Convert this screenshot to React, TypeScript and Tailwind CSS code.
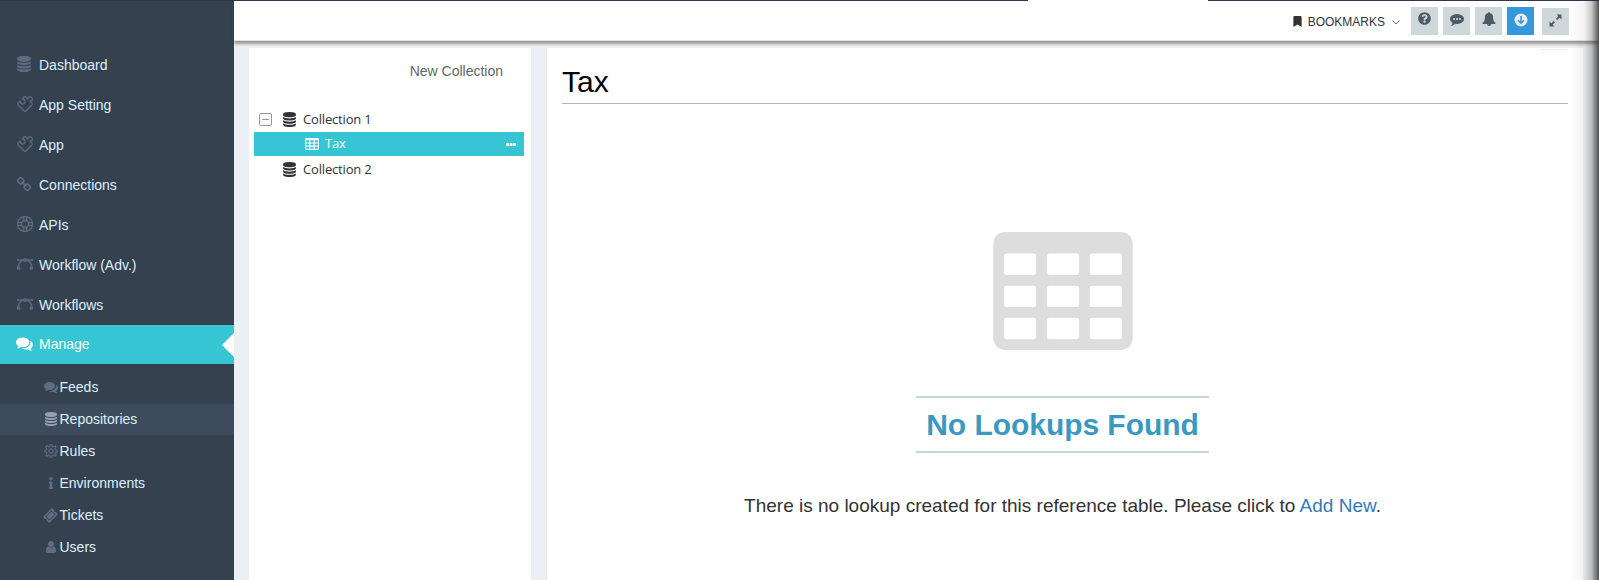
import React from "react";
import { SlPuzzle, SlSupport, SlVector, SlSettings } from "react-icons/sl";
import { FaInfo, FaTicketAlt, FaQuestionCircle, FaBookmark } from "react-icons/fa";

type IconProps = { className?: string };

const Database = ({ className }: IconProps) => (
  <svg viewBox="0 0 1536 1792" className={className} fill="currentColor">
    <path d="M768 768q237 0 443-43t325-127v170q0 69-103 128t-280 93.5-385 34.5-385-34.5-280-93.5-103-128v-170q119 84 325 127t443 43zm0 768q237 0 443-43t325-127v170q0 69-103 128t-280 93.5-385 34.5-385-34.5-280-93.5-103-128v-170q119 84 325 127t443 43zm0-384q237 0 443-43t325-127v170q0 69-103 128t-280 93.5-385 34.5-385-34.5-280-93.5-103-128v-170q119 84 325 127t443 43zm0-1152q208 0 385 34.5t280 93.5 103 128v128q0 69-103 128t-280 93.5-385 34.5-385-34.5-280-93.5-103-128v-128q0-69 103-128t280-93.5 385-34.5z" />
  </svg>
);

const Comments = ({ className }: IconProps) => (
  <svg viewBox="0 0 1792 1792" className={className} fill="currentColor">
    <path d="M1408 768q0 139-94 257t-256.5 186.5-353.5 68.5q-86 0-176-16-124 88-278 128-36 9-86 16h-3q-11 0-20.5-8t-11.5-21q-1-3-1-6.5t.5-6.5 2-6l2.5-5t3.5-5.5 4-5 4.5-5 4-4.5q5-6 23-25t26-29.5 22.5-29 25-38.5 20.5-44q-124-72-195-177t-71-224q0-139 94-257t256.5-186.5 353.5-68.5 353.5 68.5 256.500 186.5 94 257zm384 256q0 120-71 224.5t-195 176.5q10 24 20.5 44t25 38.5 22.5 29 26 29.5 23 25q1 1 4 4.5t4.5 5 4 5 3.5 5.5l2.5 5t2 6 .5 6.5-1 6.5q-3 14-13 22t-22 7q-50-7-86-16-154-40-278-128-90 16-176 16-271 0-472-132 58 4 88 4 161 0 309-45t264-129q125-92 192-212t67-254q0-77-23-152 129 71 204 178t75 230z" />
  </svg>
);

const Commenting = ({ className }: IconProps) => (
  <svg viewBox="0 0 1792 1792" className={className} fill="currentColor">
    <path
      fillRule="evenodd"
      d="M640 896q0-53-37.5-90.5t-90.5-37.5-90.5 37.5-37.5 90.5 37.5 90.5 90.5 37.5 90.5-37.5 37.5-90.5zm384 0q0-53-37.5-90.5t-90.5-37.5-90.5 37.5-37.5 90.5 37.5 90.5 90.5 37.5 90.5-37.5 37.5-90.5zm384 0q0-53-37.5-90.5t-90.5-37.5-90.5 37.5-37.5 90.5 37.5 90.5 90.5 37.5 90.5-37.5 37.5-90.5zm384 0q0 174-120 321.5t-326 233-450 85.5q-110 0-211-18-173 173-435 229-52 10-86 13-12 1-22-6t-13-18q-4-15 20-37 5-5 23.5-21.5t25.5-23.5 23.5-25.5 24-31.5 20.5-37 20-48 14.5-57.5 12.5-72.5q-146-90-229.5-216.5t-83.5-269.5q0-174 120-321.5t326-233 450-85.5 450 85.5 326 233 120 321.5z"
    />
  </svg>
);

const Bell = ({ className }: IconProps) => (
  <svg viewBox="0 0 1792 1792" className={className} fill="currentColor">
    <path d="M912 1696q0-16-16-16-59 0-101.5-42.5t-42.5-101.5q0-16-16-16t-16 16q0 73 51.5 124.5t124.5 51.5q16 0 16-16zm816-288q0 52-38 90t-90 38h-448q0 106-75 181t-181 75-181-75-75-181h-448q-52 0-90-38t-38-90q50-42 91-88t85-119.5 74.5-158.5 50-206 19.5-260q0-152 117-282.5t307-158.5q-8-19-8-39 0-40 28-68t68-28 68 28 28 68q0 20-8 39 190 28 307 158.5t117 282.5q0 139 19.5 260t50 206 74.5 158.5 85 119.5 91 88z" />
  </svg>
);

const User = ({ className }: IconProps) => (
  <svg viewBox="256 128 1280 1536" className={className} fill="currentColor">
    <path d="M1536 1399q0 109-62.5 187t-150.5 78h-854q-88 0-150.5-78t-62.5-187q0-85 8.5-160.5t31.5-152 58.5-131 94-89 134.5-34.5q131 128 313 128t313-128q76 0 134.5 34.5t94 89 58.5 131 31.5 152 8.5 160.5zm-256-887q0 159-112.5 271.5t-271.5 112.5-271.5-112.5-112.5-271.5 112.5-271.5 271.5-112.5 271.5 112.5 112.5 271.5z" />
  </svg>
);

const Chain = ({ className }: IconProps) => (
  <svg viewBox="0 0 14 14" className={className} fill="none" stroke="currentColor">
    <rect x="-2.900" y="-2.600" width="5.800" height="5.200" rx="2.200" strokeWidth="1.600" transform="translate(3.800 3.800) rotate(45)" />
    <rect x="-2.900" y="-2.600" width="5.800" height="5.200" rx="2.200" strokeWidth="1.600" transform="translate(10.200 10.200) rotate(45)" />
    <path d="M5 5l4 4" strokeWidth="1.600" strokeLinecap="round" />
  </svg>
);

const ArrowCircle = ({ className }: IconProps) => (
  <svg viewBox="0 0 14 14" className={className} fill="none">
    <circle cx="7" cy="7" r="6.5" fill="#e4eff8" />
    <path d="M7 3v7M4 7.2l3 3 3-3" stroke="#3598dc" strokeWidth="1.6" />
  </svg>
);

const Expand = ({ className }: IconProps) => (
  <svg viewBox="0 0 12 12" className={className}>
    <path d="M7 0.5h4.500v4.500zM0.500 7v4.500h4.500z" fill="currentColor" />
    <path d="M10 2L7 5M5 7L2 10" stroke="currentColor" strokeWidth="1.8" />
  </svg>
);

const COLS = [128, 640, 1152];
const ROWS = [256, 640, 1024];

const Table = ({ className }: IconProps) => (
  <svg viewBox="0 0 1664 1408" className={className} fill="currentColor">
    <path
      fillRule="evenodd"
      d={
        "M160 0h1344q160 0 160 160v1088q0 160-160 160h-1344q-160 0-160-160v-1088q0-160 160-160z" +
        ROWS.flatMap((y) =>
          COLS.map(
            (x) =>
              `M${x + 32} ${y}h320q32 0 32 32v192q0 32-32 32h-320q-32 0-32-32v-192q0-32 32-32z`
          )
        ).join("")
      }
    />
  </svg>
);

const lineIcon = "size-4 stroke-current [stroke-width:28]";

const mainNav = [
  { label: "Dashboard", icon: <Database className="h-4 w-[14px]" /> },
  { label: "App Setting", icon: <SlPuzzle className={lineIcon} /> },
  { label: "App", icon: <SlPuzzle className={lineIcon} /> },
  { label: "Connections", icon: <Chain className="size-[14px]" /> },
  { label: "APIs", icon: <SlSupport className={lineIcon} /> },
  { label: "Workflow (Adv.)", icon: <SlVector className={lineIcon} /> },
  { label: "Workflows", icon: <SlVector className={lineIcon} /> },
];

const subNav = [
  { label: "Feeds", icon: <Comments className="size-[14px]" /> },
  { label: "Repositories", icon: <Database className="h-[14px] w-3" />, active: true },
  { label: "Rules", icon: <SlSettings className="size-[14px] stroke-current [stroke-width:28]" /> },
  { label: "Environments", icon: <FaInfo className="h-3 w-[6px]" /> },
  { label: "Tickets", icon: <FaTicketAlt className="size-[13px] -rotate-45" /> },
  { label: "Users", icon: <User className="h-3 w-[10px]" /> },
];

function Sidebar() {
  return (
    <nav className="flex w-[234px] shrink-0 flex-col bg-[#364150] pt-[44px] text-[14px] text-[#dcefff]">
      {mainNav.map((n) => (
        <a key={n.label} className="flex h-10 items-center">
          <span className="ml-[17px] mb-[2px] flex w-[22px] text-[#606c80]">{n.icon}</span>
          {n.label}
        </a>
      ))}
      <a className="flex h-[39px] items-center justify-between bg-[#36c6d3] text-white">
        <span className="flex items-center">
          <Comments className="ml-4 mr-[6px] mb-[2px] size-[17px]" />
          Manage
        </span>
        <svg viewBox="0 0 12 24" className="h-6 w-3">
          <path d="M12 0v24L0 12z" fill="#fff" />
        </svg>
      </a>
      <div className="flex flex-col pt-2">
        {subNav.map((n) => (
          <a
            key={n.label}
            className={
              n.active
                ? "mb-px flex h-[31px] items-center bg-[#3e4b5c]"
                : "mb-px flex h-[31px] items-center"
            }
          >
            <span
              className={
                n.active
                  ? "ml-[43px] mr-px mb-px flex w-[15.5px] justify-center text-[#959fae]"
                  : "ml-[43px] mr-px mb-px flex w-[15.5px] justify-center text-[#606c80]"
              }
            >
              {n.icon}
            </span>
            {n.label}
          </a>
        ))}
      </div>
    </nav>
  );
}

const toolButton = "flex h-7 w-[27px] items-center justify-center bg-[#ced7da] pb-1 text-[#4f5965]";

function Header() {
  return (
    <header className="relative z-10 flex h-10 shrink-0 items-start justify-end border-b border-[#dfe3e6] bg-white pr-[30px] pt-[6px] shadow-[0_3px_3px_rgba(60,60,60,0.5)]">
      <div className="flex h-7 items-center text-[12px] text-[#333]">
        <FaBookmark className="mr-[6px] mt-px h-[11px] w-[9px]" />
        <span className="mt-px">BOOKMARKS</span>
        <svg viewBox="0 0 8 5" className="ml-[7px] mr-[11px] mt-[2px] h-[5px] w-2" fill="none">
          <path d="M.5.5L4 4 7.500.5" stroke="#666" />
        </svg>
      </div>
      <div className="flex gap-[5px]">
        <span className={toolButton}><FaQuestionCircle className="mb-px size-[13px]" /></span>
        <span className={toolButton}><Commenting className="size-[14px]" /></span>
        <span className={toolButton}><Bell className="size-[14px]" /></span>
        <span className="flex h-7 w-[27px] items-center justify-center bg-[#3598dc] pb-[3px]">
          <ArrowCircle className="size-[14px]" />
        </span>
      </div>
      <span className="ml-2 mt-px flex h-[27px] w-[27px] items-center justify-center bg-[#ced7da] pb-[3px] text-[#4f5965]">
        <Expand className="size-[13px]" />
      </span>
    </header>
  );
}

function CollectionTree() {
  return (
    <aside className="w-[282px] shrink-0 bg-white pl-[5px] pr-[7px]">
      <div className="flex h-[59px] items-start justify-end pr-[21px] pt-[13px] text-[14px] leading-5 text-[#666]">
        New Collection
      </div>
      <div className="font-['Open_Sans','Noto_Sans',sans-serif] text-[13px] tracking-[-0.17px] text-[#333]">
        <div className="flex h-[25px] items-center">
          <svg viewBox="0 0 13 13" className="ml-[5px] size-[13px]" fill="none" stroke="#999">
            <rect x=".5" y=".5" width="12" height="12" rx="1.500" />
            <path d="M3 6.500h7" />
          </svg>
          <Database className="ml-[11px] mr-[7px] h-[15px] w-[13px]" />
          Collection 1
        </div>
        <div className="flex h-6 items-center bg-[#36c6d3] text-white">
          <Table className="ml-[51px] mr-[6px] mb-px h-3 w-[14px]" />
          <span className="flex-1">Tax</span>
          <svg viewBox="0 0 10 3" className="mr-2 h-[3px] w-[10px]" fill="#fff">
            <rect width="3" height="3" rx=".5" />
            <rect x="3.500" width="3" height="3" rx=".5" />
            <rect x="7" width="3" height="3" rx=".5" />
          </svg>
        </div>
        <div className="flex h-[27px] items-center">
          <Database className="ml-[29px] mr-[7px] h-[15px] w-[13px]" />
          Collection 2
        </div>
      </div>
    </aside>
  );
}

export default function App() {
  return (
    <div className="relative flex h-[580px] w-[1599px] flex-col overflow-hidden bg-[#ecf0f4] font-['Liberation_Sans',Arial,sans-serif]">
      <div className="flex h-px shrink-0 bg-[#2b3b55]">
        <div className="w-[234px] bg-[#2d3848]" />
        <div className="ml-[794px] w-[180px] bg-white" />
      </div>
      <div className="flex min-h-0 flex-1">
        <Sidebar />
        <div className="flex min-w-0 flex-1 flex-col">
          <Header />
          <div className="mr-5 h-[7px] shrink-0 bg-[#f3f3f3]" />
          <div className="flex flex-1 gap-[15px] pl-[15px] pr-4">
            <CollectionTree />
            <main className="flex flex-1 flex-col border-l border-[#e4e8ec] bg-white pl-[15px] pr-[15px]">
              <div className="mt-px h-px w-[27px] self-end bg-[#ebebeb]" />
              <h1 className="h-[54px] border-b border-[#b5b5b5] pt-[10px] text-[30px] leading-[44px] text-black">
                Tax
              </h1>
              <section className="flex flex-col items-center pr-[5px]">
                <Table className="mt-[128px] h-[118px] w-[140px] text-[#ddd]" />
                <h2 className="mt-[46px] flex h-[57px] items-center border-y-2 border-[#c5d5de] px-[10px] pb-px text-[30px] font-bold tracking-[-0.05px] text-[#3b99c0]">
                  No Lookups Found
                </h2>
                <p className="mt-[39px] text-[19px] leading-[28px] text-[#333]">
                  There is no lookup created for this reference table. Please click to{" "}
                  <a className="text-[#337ab7]">Add New</a>.
                </p>
              </section>
            </main>
          </div>
        </div>
      </div>
      <div className="pointer-events-none absolute inset-y-0 right-0 z-20 w-[30px] bg-[linear-gradient(to_right,rgba(40,40,40,0),rgba(40,40,40,0.06)_50%,rgba(40,40,40,0.25)_75%,rgba(40,40,40,0.8))]" />
    </div>
  );
}
